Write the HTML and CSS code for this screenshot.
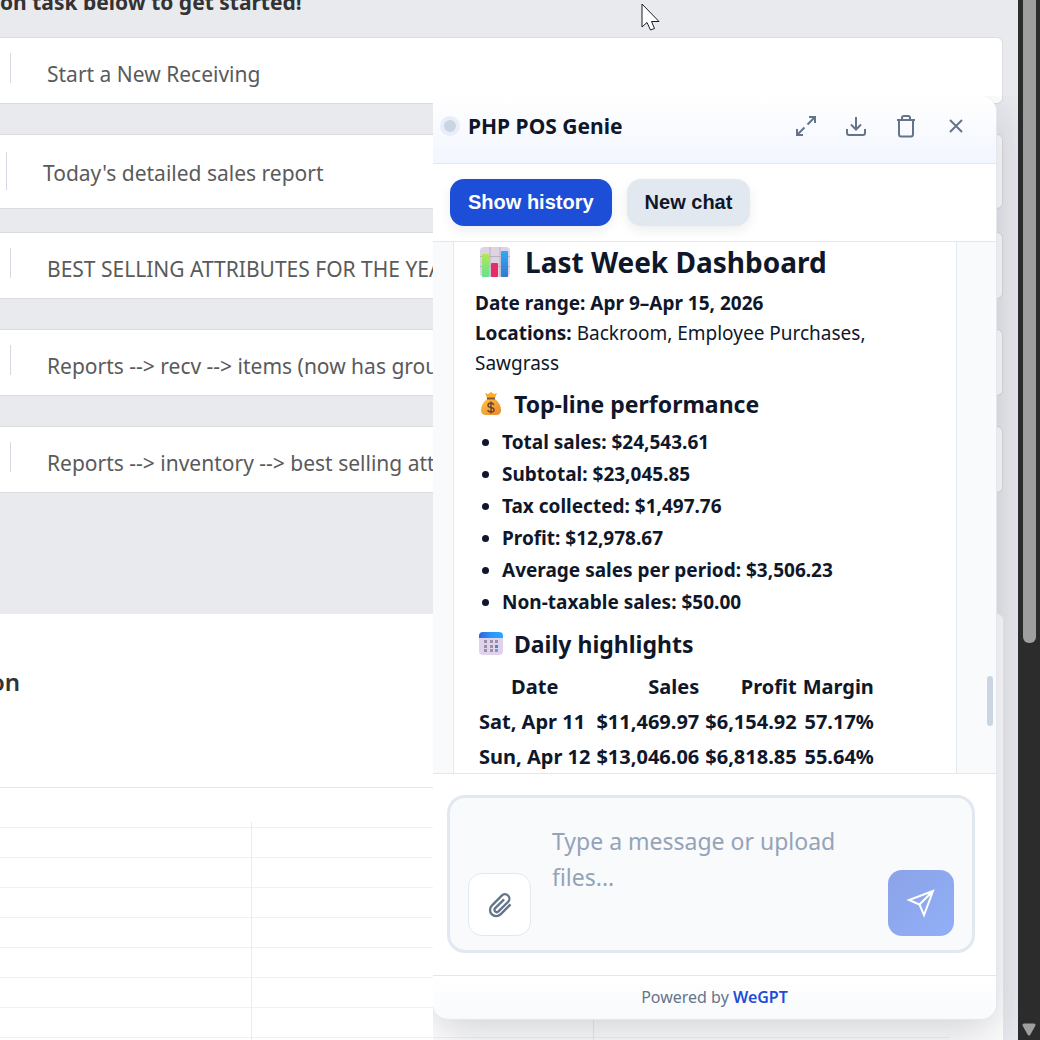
FILE: index.html
```html
<!DOCTYPE html>
<html lang="en">
<head>
  <meta charset="UTF-8">
  <title>PHP POS Genie</title>
  <link rel="stylesheet" href="styles.css">
</head>
<body>

  <main class="page">
    <h2 class="page-title">on task below to get started!</h2>

    <div class="tasks">
      <a class="task" href="#"><span class="task-text">Start a New Receiving</span></a>
      <a class="task task-tall" href="#"><span class="task-text">Today's detailed sales report</span></a>
      <a class="task" href="#"><span class="task-text">BEST SELLING ATTRIBUTES FOR THE YEAR</span></a>
      <a class="task" href="#"><span class="task-text">Reports --&gt; recv --&gt; items (now has group by)</span></a>
      <a class="task" href="#"><span class="task-text">Reports --&gt; inventory --&gt; best selling attributes</span></a>
    </div>

    <section class="panel">
      <h3 class="panel-title">on</h3>
      <div class="chart">
        <svg class="chart-grid" width="950" height="230" stroke="#f1f1f2" stroke-width="1">
          <path d="M0 5.5H950M0 35.5H950M0 65.5H950M0 95.5H950M0 125.5H950M0 155.5H950M0 185.5H950M0 215.5H950"/>
          <path d="M251.5 0V230M593.5 0V230" stroke="#ececee"/>
        </svg>
      </div>
    </section>

    <svg class="cursor" width="20" height="30" viewBox="0 0 20 30">
      <path d="M1 1V24L6 19.500L9.500 27L13.500 25.500L10.500 18.500H18Z" fill="#fff" stroke="#1b1b2b"/>
    </svg>

    <!-- chat widget -->
    <div class="widget">
      <section class="chat">
        <header class="chat-header">
          <span class="status"></span>
          <h1 class="chat-name">PHP POS Genie</h1>
          <button class="icon-btn" aria-label="Expand">
            <svg width="22" height="22" viewBox="0 0 22 22">
              <path d="M14 2H20V8M20 2L12.500 9.500M8 20H2V14M2 20L9.500 12.500"/>
            </svg>
          </button>
          <button class="icon-btn" aria-label="Download">
            <svg width="22" height="22" viewBox="0 0 22 22">
              <path d="M11 2V14.500M6 9.500L11 14.500L16 9.500M2 14V18Q2 20 4 20H18Q20 20 20 18V14"/>
            </svg>
          </button>
          <button class="icon-btn" aria-label="Delete">
            <svg width="22" height="24" viewBox="0 0 22 24">
              <path d="M2 6H20M7 6V4Q7 2 9 2H13Q15 2 15 4V6M4 6V20Q4 22.500 6 22.500H16Q18 22.500 18 20V6"/>
            </svg>
          </button>
          <button class="icon-btn" aria-label="Close">
            <svg width="22" height="22" viewBox="0 0 22 22">
              <path d="M5 5L17 17M17 5L5 17"/>
            </svg>
          </button>
        </header>

        <div class="toolbar">
          <button class="btn btn-primary">Show history</button>
          <button class="btn">New chat</button>
        </div>

        <div class="messages">
          <article class="message">
            <h2 class="report-title">
              <svg width="30" height="30" viewBox="0 0 30 30">
                <rect width="30" height="30" rx="4" fill="#dcd4e3"/>
                <path d="M0 9.500H30M0 19.500H30M10 0V30M20 0V30" stroke="#b9b0c0"/>
                <rect x="2" y="7" width="7" height="23" rx="1" fill="url(#green)"/>
                <rect x="11" y="16" width="7" height="14" rx="1" fill="#e52e68"/>
                <rect x="21" y="4" width="7" height="26" rx="1" fill="url(#blue)"/>
                <defs>
                  <linearGradient id="green" x2="0" y2="1"><stop stop-color="#b3e653"/><stop offset="1" stop-color="#65e391"/></linearGradient>
                  <linearGradient id="blue" x2="0" y2="1"><stop stop-color="#2caaf4"/><stop offset="1" stop-color="#3679cf"/></linearGradient>
                </defs>
              </svg>
              Last Week Dashboard
            </h2>
            <p class="report-info"><strong>Date range: Apr 9–Apr 15, 2026</strong><br>
              <strong>Locations:</strong> Backroom, Employee Purchases, Sawgrass</p>

            <h3 class="report-heading">
              <svg width="24" height="24" viewBox="0 0 24 24">
                <path d="M8 6L6 1L9 2L12 0L15 2L18 1L16 6Z" fill="#f8b02c"/>
                <path d="M8 7C4 10 2 14 2 18Q2 23 7 23H17Q22 23 22 18C22 14 20 10 16 7Z" fill="url(#gold)"/>
                <path d="M8 6.500H16" stroke="#8a5543" stroke-width="2"/>
                <path d="M15 13Q14 11 12 11Q9 11 9 13.500Q9 15 12 15.500Q15 16 15 18Q15 20 12 20Q9 20 9 18M12 9.500V21.500" fill="none" stroke="#704434" stroke-width="1.500"/>
                <defs>
                  <linearGradient id="gold" x1="0" y1="0" x2="1" y2="1"><stop stop-color="#ffc642"/><stop offset="1" stop-color="#e8862b"/></linearGradient>
                </defs>
              </svg>
              Top-line performance
            </h3>
            <ul class="report-list">
              <li>Total sales: $24,543.61</li>
              <li>Subtotal: $23,045.85</li>
              <li>Tax collected: $1,497.76</li>
              <li>Profit: $12,978.67</li>
              <li>Average sales per period: $3,506.23</li>
              <li>Non-taxable sales: $50.00</li>
            </ul>

            <h3 class="report-heading">
              <svg width="24" height="24" viewBox="0 0 24 24">
                <rect y="1" width="24" height="22" rx="4" fill="#e0d2ed"/>
                <path d="M0 6V4Q0 0 4 0H20Q24 0 24 4V6Z" fill="url(#sky)"/>
                <path d="M5 8h3v3h-3zM11 8h3v3h-3zM16 8h3v3h-3zM5 13h3v3h-3zM11 13h3v3h-3zM5 17h3v3h-3zM11 17h3v3h-3zM16 17h3v3h-3z" fill="#9b91a7"/>
                <path d="M16 13h3v3h-3z" fill="#2d8fea"/>
                <defs>
                  <linearGradient id="sky"><stop stop-color="#3163dc"/><stop offset=".5" stop-color="#2b94fa"/><stop offset="1" stop-color="#28a8ff"/></linearGradient>
                </defs>
              </svg>
              Daily highlights
            </h3>
            <table class="report-table">
              <thead>
                <tr><th>Date</th><th>Sales</th><th>Profit</th><th>Margin</th></tr>
              </thead>
              <tbody>
                <tr><td>Sat, Apr 11</td><td>$11,469.97</td><td>$6,154.92</td><td>57.17%</td></tr>
                <tr><td>Sun, Apr 12</td><td>$13,046.06</td><td>$6,818.85</td><td>55.64%</td></tr>
              </tbody>
            </table>
          </article>
          <span class="chat-thumb"></span>
        </div>

        <form class="composer">
          <div class="composer-box">
            <button class="attach" type="button" aria-label="Attach file">
              <svg width="28" height="28" viewBox="0 0 24 24">
                <path d="M21 11.500L12.500 20A5.300 5.300 0 0 1 5 12.500L13.500 4A3.700 3.700 0 0 1 19 9.200L10.500 17.700A2 2 0 0 1 7.700 14.900L15.500 7.200"/>
              </svg>
            </button>
            <textarea class="prompt" aria-label="Message" placeholder="Type a message or upload files..."></textarea>
            <button class="send" type="button" aria-label="Send">
              <svg width="30" height="30" viewBox="0 0 30 30">
                <path d="M27 3L3 12L13.500 16.500L18 27ZM27 3L13.500 16.500"/>
              </svg>
            </button>
          </div>
        </form>

        <footer class="chat-footer">Powered by <a href="#">WeGPT</a></footer>
      </section>
    </div>
  </main>

  <!-- page scrollbar -->
  <div class="scrollbar">
    <div class="scrollbar-thumb"></div>
    <svg width="16" height="14" viewBox="0 0 16 14">
      <path d="M3 2H13L8 11Z" fill="#9f9f9f" stroke="#9f9f9f" stroke-width="3" stroke-linejoin="round"/>
    </svg>
  </div>

</body>
</html>
```

FILE: styles.css
```css
* {
  box-sizing: border-box;
}

body {
  display: flex;
  height: 100vh;
  margin: 0;
  overflow: hidden;
  background-color: #e9eaee;
  color: #0f172a;
  font-family: "Noto Sans", sans-serif;
}

h1, h2, h3, p, ul {
  margin: 0;
}

button {
  border: none;
  cursor: pointer;
}

/* dashboard behind the chat */
.page {
  position: relative;
  flex: 1;
  display: flex;
  flex-direction: column;
  min-width: 0;
  overflow: hidden;
  padding-right: 15px;
}

.page-title {
  margin-top: -13px;
  margin-bottom: 20px;
  color: #333;
  font-size: 21px;
  line-height: 30px;
}

.task {
  display: flex;
  height: 67px;
  margin-bottom: 30px;
  padding: 15px 10px;
  background-color: #fff;
  border: 1px solid #dcdcde;
  border-left: none;
  border-radius: 0 6px 6px 0;
  color: #5a5a5a;
  font-size: 21px;
  text-decoration: none;
}

.task::before {
  content: "";
  height: 30px;
  border-left: 1px solid #d8d8e5;
}

.task-text {
  padding: 6px 36px;
  line-height: 30px;
  white-space: nowrap;
}

.task-tall {
  height: 75px;
  margin-bottom: 23px;
  padding: 17px 6px;
}

.task-tall::before {
  height: 38px;
}

.panel {
  flex: 1;
  margin-top: 91px;
  background-color: #fff;
  border-radius: 0 6px 0 0;
}

.panel-title {
  margin-left: -10px;
  padding: 49px 0 86px;
  color: #333;
  font-size: 24px;
  font-weight: 600;
  line-height: 38px;
}

.chart {
  margin-right: 53px;
  padding-top: 34px;
  border-top: 1px solid #e6e6e8;
}

.chart-grid {
  display: block;
}

.cursor {
  position: absolute;
  top: 3px;
  left: 641px;
}

/* chat widget, floats over the dashboard */
.widget {
  position: absolute;
  top: 96px;
  right: 0;
  bottom: 0;
  width: 585px;
  padding: 0 21px 20px 0;
  overflow: hidden;
}

.chat {
  display: flex;
  flex-direction: column;
  height: 100%;
  overflow: hidden;
  background-color: #fff;
  border: 1px solid #e2e8f0;
  border-top: none;
  border-left: none;
  border-radius: 0 16px 16px 16px;
  box-shadow: 0 14px 44px rgba(15, 23, 42, 0.18);
}

.chat-header {
  display: flex;
  align-items: center;
  height: 68px;
  padding: 0 15px 7px 7px;
  background: linear-gradient(#fff, #f2f6fe);
  border-bottom: 1px solid #e2e8f0;
}

.status {
  width: 20px;
  height: 20px;
  margin-right: 8px;
  background-color: #cbd5e1;
  border: 4px solid #e8edfb;
  border-radius: 50%;
}

.chat-name {
  flex: 1;
  font-size: 21px;
  line-height: 30px;
}

.icon-btn {
  display: flex;
  align-items: center;
  justify-content: center;
  width: 50px;
  height: 44px;
  padding: 0;
  background: none;
}

.icon-btn path,
.attach path {
  fill: none;
  stroke: #64748b;
  stroke-width: 2;
}

.toolbar {
  display: flex;
  gap: 15px;
  padding: 15px 17px;
  border-bottom: 1px solid #e2e8f0;
}

.btn {
  height: 47px;
  padding: 0 18px;
  background-color: #e2e8f0;
  border-radius: 14px;
  box-shadow: 0 4px 12px rgba(15, 23, 42, 0.08);
  color: #0f172a;
  font-family: "Liberation Sans", sans-serif;
  font-size: 20px;
  font-weight: bold;
}

.btn-primary {
  background-color: #1d4ed8;
  color: #fff;
}

.messages {
  position: relative;
  flex: 1;
  min-height: 0;
  overflow: hidden;
  padding: 0 39px 0 20px;
  background-color: #f8fafc;
}

.message {
  min-height: 100%;
  padding: 2px 21px;
  background-color: #fff;
  border: 1px solid #e2e8f0;
  border-width: 0 1px;
  font-size: 19px;
  line-height: 29px;
}

.report-title {
  display: flex;
  align-items: center;
  gap: 15px;
  padding-left: 5px;
  font-size: 28px;
  line-height: 36px;
}

.report-info {
  margin-top: 8px;
  line-height: 30px;
}

.report-heading {
  display: flex;
  align-items: center;
  gap: 11px;
  margin-top: 11px;
  padding-left: 4px;
  font-size: 23px;
  line-height: 30px;
}

.report-list {
  margin-top: 7px;
  padding-left: 27px;
  font-weight: bold;
  line-height: 32px;
}

.report-table {
  margin-top: 9px;
  font-size: 20px;
  font-weight: bold;
}

.report-table th,
.report-table td {
  padding: 2px;
  text-align: right;
}

.report-table th:first-child {
  text-align: center;
}

.report-table td:first-child {
  text-align: left;
}

.chat-thumb {
  position: absolute;
  right: 3px;
  bottom: 47px;
  width: 6px;
  height: 50px;
  background-color: #cbd5e1;
  border-radius: 3px;
}

.composer {
  padding: 21px 21px 22px 14px;
  border-top: 1px solid #e2e8f0;
}

.composer-box {
  display: flex;
  align-items: flex-end;
  padding: 12px 18px 14px;
  background-color: #f8fafc;
  border: 3px solid #e2e8f0;
  border-radius: 18px;
}

.attach {
  display: flex;
  align-items: center;
  justify-content: center;
  width: 63px;
  height: 63px;
  padding: 0;
  background-color: #fff;
  border: 1px solid #e2e8f0;
  border-radius: 14px;
}

.prompt {
  flex: 1;
  min-width: 0;
  height: 126px;
  padding: 13px 21px;
  background: none;
  border: none;
  outline: none;
  resize: none;
  font-family: inherit;
  font-size: 23px;
  line-height: 36px;
}

.prompt::placeholder {
  color: #94a3b8;
}

.send {
  display: flex;
  align-items: center;
  justify-content: center;
  width: 66px;
  height: 66px;
  padding: 0;
  background: linear-gradient(135deg, #8ba3e8, #91aff7);
  border-radius: 14px;
}

.send path {
  fill: none;
  stroke: #fff;
  stroke-width: 2;
}

.chat-footer {
  height: 44px;
  background: linear-gradient(#fff, #f8fafc);
  border-top: 1px solid #e2e8f0;
  color: #64748b;
  font-size: 16px;
  line-height: 42px;
  text-align: center;
}

.chat-footer a {
  color: #1d4ed8;
  font-weight: 600;
  text-decoration: none;
}

.scrollbar {
  display: flex;
  flex-direction: column;
  align-items: center;
  justify-content: space-between;
  width: 22px;
  padding-bottom: 3px;
  background-color: #2c2c2c;
}

.scrollbar-thumb {
  width: 13px;
  height: 62%;
  background-color: #9f9f9f;
  border-radius: 0 0 6px 6px;
}
```
